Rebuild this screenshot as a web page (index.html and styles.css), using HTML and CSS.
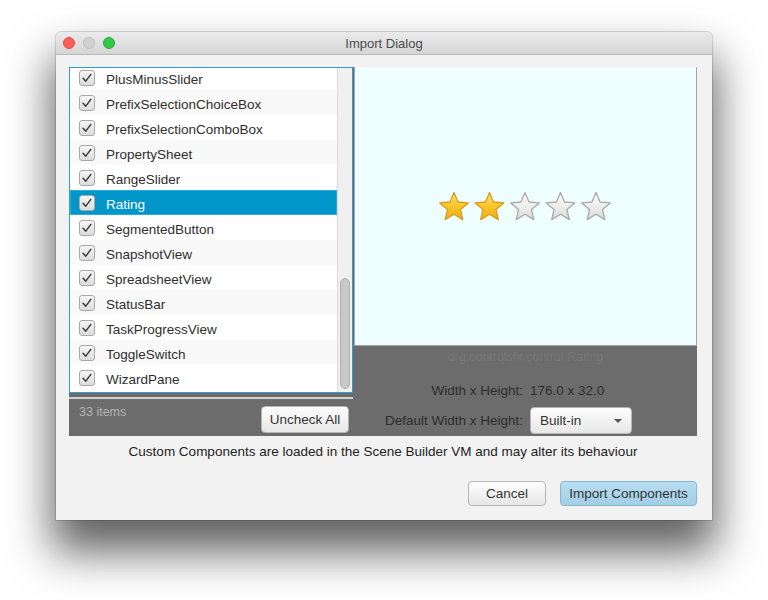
FILE: index.html
```html
<!DOCTYPE html>
<html>
<head>
<meta charset="utf-8">
<link rel="stylesheet" href="styles.css">
</head>
<body>
<div class="window">
  <div class="titlebar">
    <div class="lights"><span class="light red"></span><span class="light gray"></span><span class="light green"></span></div>
    <div class="title">Import Dialog</div>
    <div></div>
  </div>
  <div class="content">
    <div class="panel">
      <div class="left">
        <div class="list">
          <div class="rows">
            <div class="row first"><span class="cb"><svg viewBox="0 0 16 16"><path d="M3.5 8.2 L6.6 11.6 L12.4 3.8"/></svg></span>PlusMinusSlider</div>
            <div class="row alt"><span class="cb"><svg viewBox="0 0 16 16"><path d="M3.5 8.2 L6.6 11.6 L12.4 3.8"/></svg></span>PrefixSelectionChoiceBox</div>
            <div class="row"><span class="cb"><svg viewBox="0 0 16 16"><path d="M3.5 8.2 L6.6 11.6 L12.4 3.8"/></svg></span>PrefixSelectionComboBox</div>
            <div class="row alt"><span class="cb"><svg viewBox="0 0 16 16"><path d="M3.5 8.2 L6.6 11.6 L12.4 3.8"/></svg></span>PropertySheet</div>
            <div class="row"><span class="cb"><svg viewBox="0 0 16 16"><path d="M3.5 8.2 L6.6 11.6 L12.4 3.8"/></svg></span>RangeSlider</div>
            <div class="row selected"><span class="cb"><svg viewBox="0 0 16 16"><path d="M3.5 8.2 L6.6 11.6 L12.4 3.8"/></svg></span>Rating</div>
            <div class="row"><span class="cb"><svg viewBox="0 0 16 16"><path d="M3.5 8.2 L6.6 11.6 L12.4 3.8"/></svg></span>SegmentedButton</div>
            <div class="row alt"><span class="cb"><svg viewBox="0 0 16 16"><path d="M3.5 8.2 L6.6 11.6 L12.4 3.8"/></svg></span>SnapshotView</div>
            <div class="row"><span class="cb"><svg viewBox="0 0 16 16"><path d="M3.5 8.2 L6.6 11.6 L12.4 3.8"/></svg></span>SpreadsheetView</div>
            <div class="row alt"><span class="cb"><svg viewBox="0 0 16 16"><path d="M3.5 8.2 L6.6 11.6 L12.4 3.8"/></svg></span>StatusBar</div>
            <div class="row"><span class="cb"><svg viewBox="0 0 16 16"><path d="M3.5 8.2 L6.6 11.6 L12.4 3.8"/></svg></span>TaskProgressView</div>
            <div class="row alt"><span class="cb"><svg viewBox="0 0 16 16"><path d="M3.5 8.2 L6.6 11.6 L12.4 3.8"/></svg></span>ToggleSwitch</div>
            <div class="row"><span class="cb"><svg viewBox="0 0 16 16"><path d="M3.5 8.2 L6.6 11.6 L12.4 3.8"/></svg></span>WizardPane</div>
          </div>
          <div class="scrollbar"><div class="thumb"></div></div>
        </div>
        <div class="sep"></div>
        <div class="list-footer">
          <span class="count">33 items</span>
          <button class="btn uncheck">Uncheck All</button>
        </div>
      </div>
      <div class="right">
        <div class="preview">
          <svg class="stars" width="176" height="32" viewBox="0 0 176 32">
            <defs>
              <linearGradient id="gold" x1="0" y1="0" x2="0" y2="1">
                <stop offset="0" stop-color="#ffe27a"/>
                <stop offset="0.5" stop-color="#fcc52c"/>
                <stop offset="1" stop-color="#f2ad12"/>
              </linearGradient>
              <linearGradient id="grey" x1="0" y1="0" x2="0" y2="1">
                <stop offset="0" stop-color="#ffffff"/>
                <stop offset="0.55" stop-color="#ececec"/>
                <stop offset="1" stop-color="#d9d9d9"/>
              </linearGradient>
              <polygon id="star" points="16,1.5 20,11 30.3,11.9 22.5,18.6 24.8,28.6 16,23.3 7.2,28.6 9.5,18.6 1.7,11.9 12,11"/>
            </defs>
            <use href="#star" x="0" y="0" fill="url(#gold)" stroke="#d59c1c" stroke-width="1.3" stroke-linejoin="round"/>
            <use href="#star" x="35.5" y="0" fill="url(#gold)" stroke="#d59c1c" stroke-width="1.3" stroke-linejoin="round"/>
            <use href="#star" x="71" y="0" fill="url(#grey)" stroke="#a9a9a9" stroke-width="1.3" stroke-linejoin="round"/>
            <use href="#star" x="106.5" y="0" fill="url(#grey)" stroke="#a9a9a9" stroke-width="1.3" stroke-linejoin="round"/>
            <use href="#star" x="142" y="0" fill="url(#grey)" stroke="#a9a9a9" stroke-width="1.3" stroke-linejoin="round"/>
          </svg>
        </div>
        <div class="info">
          <div class="classname">org.controlsfx.control.Rating</div>
          <div class="props">
            <span class="lbl">Width x Height:</span><span class="val">176.0 x 32.0</span>
            <span class="lbl">Default Width x Height:</span>
            <div class="combo"><span>Built-in</span><span class="arrow"></span></div>
          </div>
        </div>
      </div>
    </div>
    <p class="note">Custom Components are loaded in the Scene Builder VM and may alter its behaviour</p>
    <div class="actions">
      <button class="btn cancel">Cancel</button>
      <button class="btn primary">Import Components</button>
    </div>
  </div>
</div>
</body>
</html>
```
FILE: styles.css
```css
html, body {
  margin: 0;
  background: #ffffff;
}
body {
  padding: 32px 0 0 56px;
  height: 600px;
  box-sizing: border-box;
  font-family: "Liberation Sans", Arial, sans-serif;
  font-size: 13.5px;
  color: #333;
}
.window {
  width: 656px;
  height: 488px;
  background: #f2f2f2;
  border-radius: 5px 5px 0 0;
  box-shadow: 0 0 0 1px rgba(0,0,0,0.14), 0 28px 44px 4px rgba(0,0,0,0.62);
  display: flex;
  flex-direction: column;
  overflow: hidden;
}
.titlebar {
  height: 22px;
  flex: none;
  border-bottom: 1px solid #b9b9b9;
  background: linear-gradient(#ebebeb, #d5d5d5);
  display: grid;
  grid-template-columns: 1fr auto 1fr;
  align-items: center;
}
.lights {
  display: flex;
  gap: 8px;
  padding-left: 7px;
}
.light {
  width: 12px;
  height: 12px;
  border-radius: 50%;
  box-sizing: border-box;
}
.red { background: #fc5f57; border: 1px solid #df4744; }
.gray { background: #d1d1d1; border: 1px solid #bfbfbf; }
.green { background: #33c748; border: 1px solid #27a83a; }
.title {
  color: #4b4b4b;
  font-size: 13px;
}
.content {
  padding: 12px 15px 14px 13px;
  display: flex;
  flex-direction: column;
}
.panel {
  height: 369px;
  background: #6c6c6c;
  display: flex;
}
.left {
  width: 284px;
  display: flex;
  flex-direction: column;
}
.list {
  height: 326px;
  flex: none;
  box-sizing: border-box;
  border: 1px solid #2b9fd3;
  background: #fff;
  display: flex;
  overflow: hidden;
}
.rows {
  flex: 1;
  overflow: hidden;
}
.row {
  height: 25px;
  display: flex;
  align-items: center;
  gap: 11px;
  padding-left: 9px;
  padding-top: 3px;
  box-sizing: border-box;
  color: #2e2e2e;
  background: #fff;
}
.row.first { margin-top: -3px; }
.row.alt { background: #f9f9f9; }
.row.selected {
  background: #0096c9;
  color: #fff;
  box-shadow: inset 0 0 0 1px #2ba9d8;
}
.cb {
  width: 16px;
  height: 16px;
  margin-top: -3px;
  box-sizing: border-box;
  border: 1px solid #a9a9a9;
  border-radius: 3px;
  background: linear-gradient(#f6f6f6, #dcdcdc);
  display: flex;
}
.cb svg {
  width: 14px;
  height: 14px;
}
.cb path {
  fill: none;
  stroke: #3b3b3b;
  stroke-width: 1.7;
  stroke-linecap: round;
  stroke-linejoin: round;
}
.scrollbar {
  width: 15px;
  box-sizing: border-box;
  border-left: 1px solid #d9d9d9;
  background: #f0f0f0;
  display: flex;
  flex-direction: column;
  justify-content: flex-end;
  align-items: center;
  padding-bottom: 3px;
}
.thumb {
  width: 10px;
  height: 111px;
  box-sizing: border-box;
  border: 1px solid #b1b1b1;
  border-radius: 5px;
  background: #c8c8c8;
}
.sep {
  margin-top: 4px;
  height: 2px;
  background: #cfcfcf;
}
.list-footer {
  display: flex;
  justify-content: space-between;
  align-items: flex-start;
  padding: 7px 4px 0 10px;
}
.count {
  font-size: 12.5px;
  line-height: 13px;
  color: #b4b4b4;
}
.btn {
  font-family: "Liberation Sans", Arial, sans-serif;
  font-size: 13.5px;
  color: #333;
  background: linear-gradient(#fdfdfd, #e7e7e7);
  border: 1px solid #b4b4b4;
  border-radius: 4px;
  padding: 0;
  margin: 0;
}
.uncheck {
  width: 88px;
  height: 27px;
}
.right {
  flex: 1;
  margin-left: 1px;
  display: flex;
  flex-direction: column;
}
.preview {
  height: 279px;
  flex: none;
  box-sizing: border-box;
  background: #efffff;
  border: 1px solid #a5a5a5;
  border-top: none;
  display: flex;
  align-items: center;
  justify-content: center;
}
.stars {
  display: block;
  margin-left: 1px;
  margin-top: 2px;
}
.info {
  display: flex;
  flex-direction: column;
}
.classname {
  margin-top: 4px;
  font-size: 12.5px;
  line-height: 14px;
  color: #777777;
  text-align: center;
}
.props {
  margin-top: 18px;
  padding-left: 31px;
  display: grid;
  grid-template-columns: auto auto;
  justify-content: start;
  column-gap: 7px;
  row-gap: 8px;
  align-items: center;
  color: #2d2d2d;
  line-height: 17px;
}
.lbl { text-align: right; }
.combo {
  width: 102px;
  height: 27px;
  box-sizing: border-box;
  border: 1px solid #b4b4b4;
  border-radius: 4px;
  background: linear-gradient(#fdfdfd, #e7e7e7);
  display: flex;
  align-items: center;
  justify-content: space-between;
  padding: 0 9px 0 9px;
  color: #333;
}
.arrow {
  width: 0;
  height: 0;
  border-left: 4px solid transparent;
  border-right: 4px solid transparent;
  border-top: 4px solid #555;
}
.note {
  margin: 8px 0 0 0;
  line-height: 16px;
  text-align: center;
  color: #222;
}
.actions {
  margin-top: 21px;
  display: flex;
  justify-content: flex-end;
  gap: 14px;
}
.cancel {
  width: 78px;
  height: 25px;
}
.primary {
  width: 137px;
  height: 25px;
  background: linear-gradient(#b8ddf0, #a1cfe6);
  border-color: #87b5cd;
}
```
